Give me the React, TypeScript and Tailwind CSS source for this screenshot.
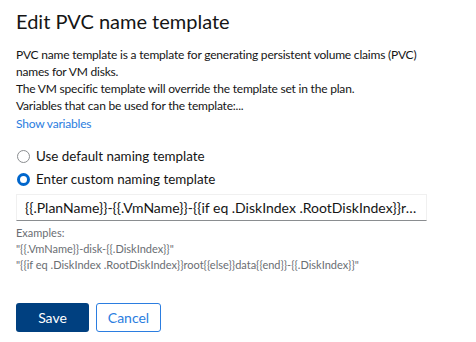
import { useState } from 'react';

const FONT = { fontFamily: 'Lato, "Liberation Sans", sans-serif' };

export default function App() {
  const [mode, setMode] = useState<'default' | 'custom'>('custom');
  const [value, setValue] = useState(
    '{{.PlanName}}-{{.VmName}}-{{if eq .DiskIndex .RootDiskIndex}}root{{else}}data{{end}}-{{.DiskIndex}}',
  );

  return (
    <div className="w-[476px] h-[342px] bg-white px-4 pt-[6px] text-[#151515]" style={FONT}>
      <h1 className="text-[20px] leading-[30px] font-normal">Edit PVC name template</h1>

      <div className="mt-[10px] w-[420px] text-[12px] leading-[17px] tracking-[-0.2px]">
        <p>PVC name template is a template for generating persistent volume claims (PVC) names for VM disks.</p>
        <p>The VM specific template will override the template set in the plan.</p>
        <p>Variables that can be used for the template:...</p>
      </div>

      <button className="block text-[12px] leading-[20px] tracking-[-0.2px] text-[#2b7de0]">Show variables</button>

      {/* Radio group */}
      <div className="mt-[14px] flex flex-col gap-[6px]">
        <label className="flex items-center gap-[6px] text-[13.4px] leading-[17px] cursor-pointer">
          <input
            type="radio"
            checked={mode === 'default'}
            onChange={() => setMode('default')}
            className="sr-only"
          />
          <span
            className={
              mode === 'default'
                ? 'w-[13px] h-[13px] rounded-full border-[3px] border-[#0066cc] ml-[1px]'
                : 'w-[13px] h-[13px] rounded-full border border-[#8a8d90] ml-[1px]'
            }
          />
          Use default naming template
        </label>
        <label className="flex items-center gap-[6px] text-[13.4px] leading-[17px] cursor-pointer">
          <input
            type="radio"
            checked={mode === 'custom'}
            onChange={() => setMode('custom')}
            className="sr-only"
          />
          <span
            className={
              mode === 'custom'
                ? 'w-[13px] h-[13px] rounded-full border-[3px] border-[#0066cc] ml-[1px]'
                : 'w-[13px] h-[13px] rounded-full border border-[#8a8d90] ml-[1px]'
            }
          />
          Enter custom naming template
        </label>
      </div>

      {/* Template input */}
      <input
        type="text"
        value={value}
        onChange={(e) => setValue(e.target.value)}
        className="block mt-[6px] w-[411px] h-[27px] pl-[8px] pr-[8px] text-[14px] border border-[#f0f0f0] border-b-[#8a8d90] outline-none text-ellipsis"
        style={FONT}
      />

      <div className="mt-[4px] text-[11px] leading-[16px] text-[#6a6e73]">
        <div>Examples:</div>
        <div>"{'{{.VmName}}-disk-{{.DiskIndex}}'}"</div>
        <div>"{'{{if eq .DiskIndex .RootDiskIndex}}root{{else}}data{{end}}-{{.DiskIndex}}'}"</div>
      </div>

      <div className="mt-[30px] flex gap-[7px]">
        <button className="w-[73px] h-[29px] rounded-[3px] bg-[#004080] text-white text-[14px]">Save</button>
        <button className="w-[65px] h-[29px] rounded-[3px] border border-[#2b7de0] text-[#2b7de0] text-[14px]">
          Cancel
        </button>
      </div>
    </div>
  );
}
